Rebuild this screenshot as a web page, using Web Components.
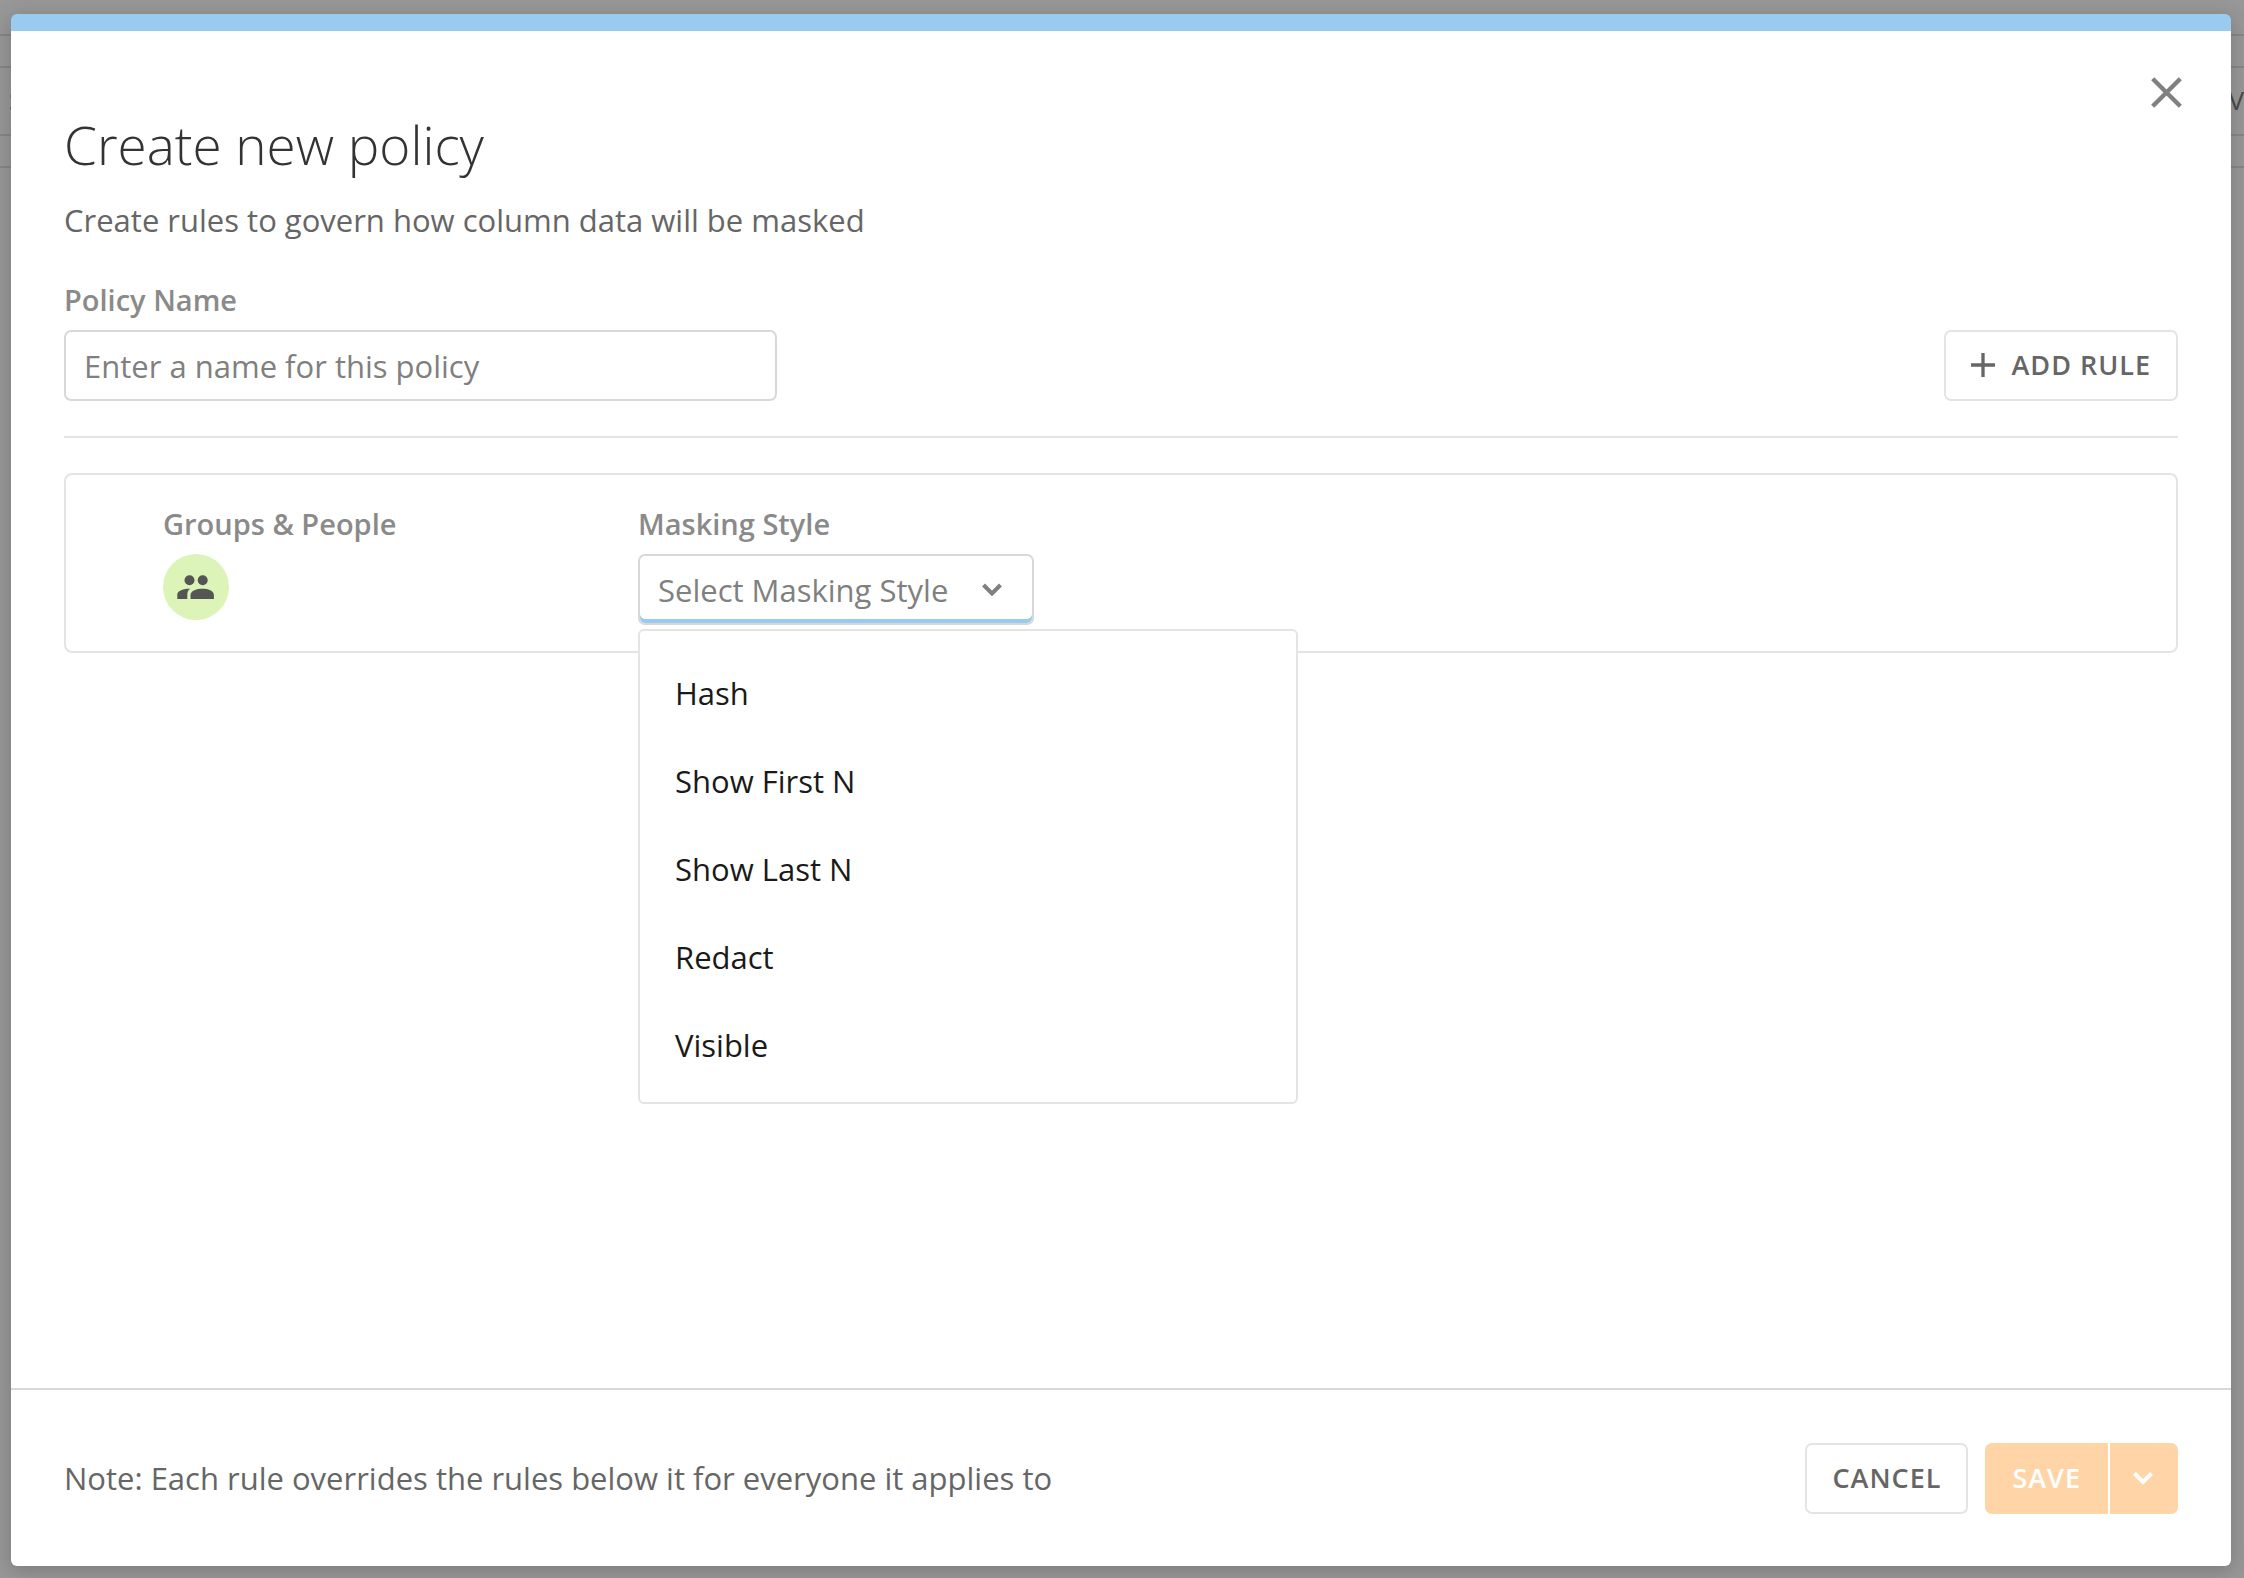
<!DOCTYPE html>
<html lang="en">
<head>
<meta charset="utf-8">
<meta name="viewport" content="width=device-width, initial-scale=1">
<title>Create new policy</title>
<style>
  html, body { margin: 0; height: 100%; }
  body {
    display: grid;
    overflow: hidden;
    font-family: "Open Sans", sans-serif;
    font-size: 31px;
    line-height: 44px;
    color: #666;
    background: #979797;
  }
  page-behind, policy-dialog { grid-area: 1 / 1; }
</style>
</head>
<body>
<page-behind></page-behind>
<policy-dialog>
  <dialog-header slot="header">
    <span slot="title">Create new policy</span>
    <span slot="subtitle">Create rules to govern how column data will be masked</span>
  </dialog-header>
  <policy-name-row></policy-name-row>
  <rule-card></rule-card>
  <dialog-footer slot="footer">Note: Each rule overrides the rules below it for everyone it applies to</dialog-footer>
</policy-dialog>

<script>
  function define(name, html) {
    const template = document.createElement('template');
    template.innerHTML = '<style>*{box-sizing:border-box}</style>' + html;
    customElements.define(name, class extends HTMLElement {
      constructor() {
        super();
        this.attachShadow({ mode: 'open' }).append(template.content.cloneNode(true));
      }
    });
  }

  /* Dimmed table header of the page under the dialog */
  define('page-behind', `
    <style>
      :host { display: block; padding-top: 34px; color: #4a4a4a; font-size: 26px; line-height: 34px; }
      .band { height: 34px; border-top: 2px solid #868686; border-bottom: 2px solid #868686; }
      .row { display: flex; justify-content: space-between; align-items: center; height: 66px; padding: 0 0 2px 9px; }
    </style>
    <div class="band"></div>
    <div class="row"><span>S</span><span>V</span></div>
    <div class="band"></div>
  `);

  define('policy-dialog', `
    <style>
      :host {
        display: flex; flex-direction: column; position: relative;
        margin: 14px 13px 12px 11px;
        background: #fff; border-radius: 6px; overflow: hidden;
        border-top: 17px solid #99cbee;
        box-shadow: 0 4px 20px rgba(0, 0, 0, .2);
      }
      main { flex: 1; padding: 0 53px; }
    </style>
    <slot name="header"></slot>
    <main><slot></slot></main>
    <slot name="footer"></slot>
  `);

  define('dialog-header', `
    <style>
      :host { display: flex; justify-content: space-between; align-items: flex-start; padding: 46px 49px 0 53px; }
      h1 { margin: 32px 0 17px; font-size: 53px; line-height: 72px; font-weight: 300; color: #333; }
      p { margin: 0; }
      button { display: block; padding: 0; border: 0; background: none; color: #808080; }
      svg { display: block; width: 31px; height: 31px; }
    </style>
    <div>
      <h1><slot name="title"></slot></h1>
      <p><slot name="subtitle"></slot></p>
    </div>
    <button type="button" aria-label="Close">
      <svg viewBox="0 0 31 31" fill="none" stroke="currentColor" stroke-width="4.400"><path d="M1.700 1.700 29.300 29.300M29.300 1.700 1.700 29.300"/></svg>
    </button>
  `);

  define('ui-button', `
    <style>
      :host { display: block; }
      button {
        display: flex; align-items: center; justify-content: center; gap: 17px;
        height: 71px; padding: 0 25px 2px; border: 2px solid #e4e4e4; border-radius: 7px; background: #fff;
        font: 600 27px/36px "Open Sans", sans-serif; letter-spacing: 1px; color: #666;
      }
    </style>
    <button type="button"><slot name="icon"></slot><span><slot></slot></span></button>
  `);

  define('policy-name-row', `
    <style>
      :host { display: flex; justify-content: space-between; align-items: flex-end; margin-top: 39px; padding-bottom: 35px; border-bottom: 2px solid #e4e4e4; }
      .field { display: flex; flex-direction: column; gap: 11px; width: 713px; }
      label { font-size: 29px; line-height: 38px; font-weight: 600; color: #8a8a8a; }
      input {
        width: 100%; height: 71px; padding: 0 18px; border: 2px solid #d8d8d8; border-radius: 7px;
        font: inherit; background: #fff; color: #666;
      }
      input::placeholder { color: #808080; opacity: 1; }
      svg { display: block; width: 24px; height: 24px; }
    </style>
    <div class="field">
      <label for="name">Policy Name</label>
      <input id="name" type="text" placeholder="Enter a name for this policy">
    </div>
    <ui-button>
      <svg slot="icon" viewBox="0 0 24 24" fill="none" stroke="currentColor" stroke-width="3.300"><path d="M12 0V24M0 12H24"/></svg>
      ADD RULE
    </ui-button>
  `);

  define('group-avatar', `
    <style>
      :host { display: block; }
      button {
        display: grid; place-items: center; width: 66px; height: 66px; padding: 0;
        border: 0; border-radius: 50%; background: #dcf4b7; color: #555;
      }
      svg { display: block; width: 38px; height: 24px; }
    </style>
    <button type="button" aria-label="Choose groups and people">
      <svg viewBox="0 0 38 24" fill="currentColor">
        <circle cx="12.5" cy="5.2" r="5"/><circle cx="25.7" cy="5.2" r="5"/>
        <path d="M0.3 24V19.600C0.300 15.500 7 13.700 13 13.800C10.700 15.700 10.300 18 10.300 20V24Z"/>
        <path d="M13.500 24V20C13.500 15.600 20 13.800 25.400 13.800S36.900 15.600 36.900 20V24Z"/>
      </svg>
    </button>
  `);

  define('menu-option', `
    <style>
      :host { display: block; padding: 22px 35px; color: #1a1a1a; }
    </style>
    <slot></slot>
  `);

  define('masking-select', `
    <style>
      :host { display: flex; flex-direction: column; align-items: flex-start; gap: 11px; position: relative; }
      label { font-size: 29px; line-height: 38px; font-weight: 600; color: #8a8a8a; }
      .box { display: grid; align-items: center; }
      select, svg { grid-area: 1 / 1; }
      select {
        appearance: none; height: 71px; width: 396px; padding: 0 18px;
        border: 2px solid #d8d8d8; border-radius: 7px; background: #fff;
        box-shadow: inset 0 -4px #99cbee; font: inherit; color: #808080;
      }
      svg { justify-self: end; margin-right: 32px; width: 20px; height: 13px; pointer-events: none; }
      .menu {
        position: absolute; top: 100%; left: 0; z-index: 1; margin-top: 4px;
        width: 660px; padding: 18px 0 13px; border: 2px solid #e4e4e4; border-radius: 6px; background: #fff;
      }
    </style>
    <label for="style">Masking Style</label>
    <div class="box">
      <select id="style"><option>Select Masking Style</option></select>
      <svg viewBox="0 0 20 13" fill="none" stroke="#808080" stroke-width="4"><path d="M1.500 2 10 10.500 18.500 2"/></svg>
    </div>
    <div class="menu" role="listbox" aria-label="Masking Style">
      <menu-option role="option">Hash</menu-option>
      <menu-option role="option">Show First N</menu-option>
      <menu-option role="option">Show Last N</menu-option>
      <menu-option role="option">Redact</menu-option>
      <menu-option role="option">Visible</menu-option>
    </div>
  `);

  define('rule-card', `
    <style>
      :host {
        display: grid; grid-template-columns: 475px 1fr; margin-top: 35px;
        padding: 30px 97px 26px; border: 2px solid #e4e4e4; border-radius: 8px;
      }
      .people { display: flex; flex-direction: column; gap: 11px; }
      .label { font-size: 29px; line-height: 38px; font-weight: 600; color: #8a8a8a; }
    </style>
    <div class="people">
      <span class="label">Groups &amp; People</span>
      <group-avatar></group-avatar>
    </div>
    <masking-select></masking-select>
  `);

  define('split-button', `
    <style>
      :host { display: flex; gap: 2px; }
      button {
        display: grid; place-items: center; height: 71px; padding: 0 27px 2px; border: 0; background: #ffd5a8;
        font: 600 27px/36px "Open Sans", sans-serif; letter-spacing: 1px; color: #fff;
      }
      .main { border-radius: 7px 0 0 7px; }
      .more { width: 68px; padding: 0 3px 0 0; border-radius: 0 7px 7px 0; }
      svg { display: block; width: 20px; height: 13px; }
    </style>
    <button class="main" type="button"><slot></slot></button>
    <button class="more" type="button" aria-label="More save options">
      <svg viewBox="0 0 20 13" fill="none" stroke="currentColor" stroke-width="4"><path d="M1.500 1.500 10 10 18.500 1.500"/></svg>
    </button>
  `);

  define('dialog-footer', `
    <style>
      :host { display: flex; justify-content: space-between; align-items: center; padding: 53px 53px 52px; border-top: 2px solid #d8d8d8; }
      .note { padding-bottom: 2px; }
      .actions { display: flex; gap: 17px; }
    </style>
    <span class="note"><slot></slot></span>
    <div class="actions">
      <ui-button>CANCEL</ui-button>
      <split-button>SAVE</split-button>
    </div>
  `);
</script>
</body>
</html>
